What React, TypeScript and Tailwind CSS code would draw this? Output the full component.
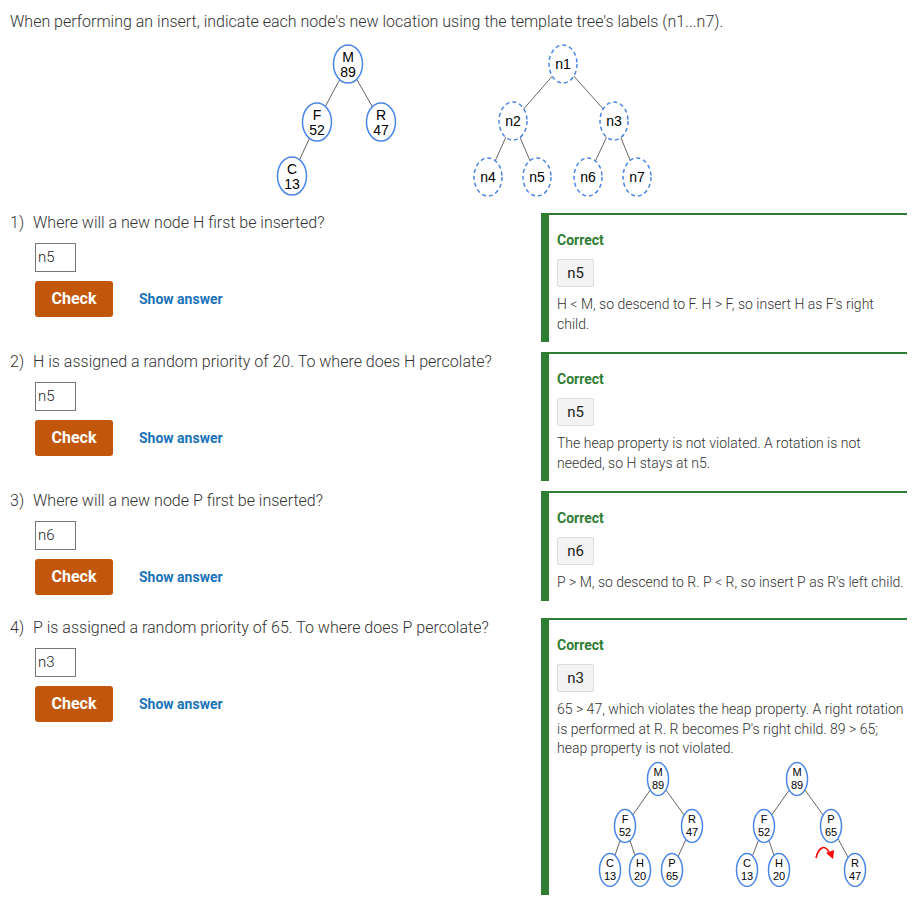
import React from "react";

const SVGF = '"Liberation Sans", Arial, sans-serif';
const BLUE = "#4a86e8";

type N = { x: number; y: number; a: string; b?: string };

function Tree({
  nodes,
  edges,
  rx,
  ry,
  fs,
  dy1,
  dy2,
  dashed,
}: {
  nodes: N[];
  edges: [number, number][];
  rx: number;
  ry: number;
  fs: number;
  dy1: number;
  dy2: number;
  dashed?: boolean;
}) {
  return (
    <g>
      {edges.map(([i, j], k) => (
        <line key={k} x1={nodes[i].x} y1={nodes[i].y} x2={nodes[j].x} y2={nodes[j].y} stroke="#666" strokeWidth={1} />
      ))}
      {nodes.map((n, k) => (
        <g key={k}>
          <ellipse
            cx={n.x}
            cy={n.y}
            rx={rx}
            ry={ry}
            fill="#fff"
            stroke={BLUE}
            strokeWidth={1.5}
            strokeDasharray={dashed ? "4 3" : undefined}
          />
          {n.b !== undefined ? (
            <>
              <text x={n.x} y={n.y + dy1} fontSize={fs} textAnchor="middle" fontFamily={SVGF} fill="#000">
                {n.a}
              </text>
              <text x={n.x} y={n.y + dy2} fontSize={fs} textAnchor="middle" fontFamily={SVGF} fill="#000">
                {n.b}
              </text>
            </>
          ) : (
            <text x={n.x} y={n.y + 5} fontSize={fs} textAnchor="middle" fontFamily={SVGF} fill="#000">
              {n.a}
            </text>
          )}
        </g>
      ))}
    </g>
  );
}

function TopTrees() {
  const left: N[] = [
    { x: 348, y: 64, a: "M", b: "89" },
    { x: 317, y: 122, a: "F", b: "52" },
    { x: 381, y: 122, a: "R", b: "47" },
    { x: 292, y: 176, a: "C", b: "13" },
  ];
  const tpl: N[] = [
    { x: 563, y: 64, a: "n1" },
    { x: 513, y: 121, a: "n2" },
    { x: 614, y: 121, a: "n3" },
    { x: 488, y: 177, a: "n4" },
    { x: 537, y: 177, a: "n5" },
    { x: 588, y: 177, a: "n6" },
    { x: 637, y: 177, a: "n7" },
  ];
  return (
    <svg width={400} height={160} viewBox="268 40 400 160" className="ml-[258px] mt-[8px] block">
      <Tree nodes={left} edges={[[0, 1], [0, 2], [1, 3]]} rx={14.5} ry={19} fs={14} dy1={-2} dy2={13} />
      <Tree
        nodes={tpl}
        edges={[[0, 1], [0, 2], [1, 3], [1, 4], [2, 5], [2, 6]]}
        rx={14}
        ry={19}
        fs={14}
        dy1={0}
        dy2={0}
        dashed
      />
    </svg>
  );
}

function BottomTrees() {
  const a: N[] = [
    { x: 658, y: 778, a: "M", b: "89" },
    { x: 625, y: 825, a: "F", b: "52" },
    { x: 692, y: 825, a: "R", b: "47" },
    { x: 610, y: 869, a: "C", b: "13" },
    { x: 640, y: 869, a: "H", b: "20" },
    { x: 672, y: 869, a: "P", b: "65" },
  ];
  const b: N[] = [
    { x: 797, y: 778, a: "M", b: "89" },
    { x: 764, y: 825, a: "F", b: "52" },
    { x: 831, y: 825, a: "P", b: "65" },
    { x: 747, y: 869, a: "C", b: "13" },
    { x: 779, y: 869, a: "H", b: "20" },
    { x: 855, y: 869, a: "R", b: "47" },
  ];
  return (
    <svg width={348} height={128} viewBox="557 758 348 128" className="block">
      <Tree nodes={a} edges={[[0, 1], [0, 2], [1, 3], [1, 4], [2, 5]]} rx={10.5} ry={16.5} fs={11} dy1={-3} dy2={10} />
      <Tree nodes={b} edges={[[0, 1], [0, 2], [1, 3], [1, 4], [2, 5]]} rx={10.5} ry={16.5} fs={11} dy1={-3} dy2={10} />
      <path d="M816 857 C 818 848, 824 842, 829 851" fill="none" stroke="#f00" strokeWidth={1.6} />
      <polygon points="826,852 834,849 833,858" fill="#f00" />
    </svg>
  );
}

type Q = { num: string; text: string; input: string; answer: string; expl: string; extra?: boolean };

const qs: Q[] = [
  {
    num: "1)",
    text: "Where will a new node H first be inserted?",
    input: "n5",
    answer: "n5",
    expl: "H < M, so descend to F. H > F, so insert H as F's right child.",
  },
  {
    num: "2)",
    text: "H is assigned a random priority of 20. To where does H percolate?",
    input: "n5",
    answer: "n5",
    expl: "The heap property is not violated. A rotation is not needed, so H stays at n5.",
  },
  {
    num: "3)",
    text: "Where will a new node P first be inserted?",
    input: "n6",
    answer: "n6",
    expl: "P > M, so descend to R. P < R, so insert P as R's left child.",
  },
  {
    num: "4)",
    text: "P is assigned a random priority of 65. To where does P percolate?",
    input: "n3",
    answer: "n3",
    expl: "65 > 47, which violates the heap property. A right rotation is performed at R. R becomes P's right child. 89 > 65; heap property is not violated.",
    extra: true,
  },
];

function Row({ q }: { q: Q }) {
  return (
    <div className="flex items-start mb-[10px]">
      <div className="w-[531px] pb-[13px]">
        <div className="flex text-[16px] leading-[20px] font-light text-[#333]">
          <span className="w-[23px] shrink-0">{q.num}</span>
          <span>{q.text}</span>
        </div>
        <div className="ml-[25px] mt-[10px] w-[41px] h-[29px] border border-[#767676] pl-[2px] text-[15px] leading-[27px] font-light text-[#222]">
          {q.input}
        </div>
        <div className="ml-[25px] mt-[9px] flex items-center">
          <div className="w-[78px] h-[36px] rounded-[3px] bg-[#c2570c] text-white font-bold text-[16px] flex items-center justify-center">
            Check
          </div>
          <div className="ml-[26px] text-[14px] font-bold text-[#1a72b8]">Show answer</div>
        </div>
      </div>
      <div className="w-[366px] border-t-2 border-l-8 border-[#2e7d32] pl-[8px] pr-[2px] pt-[15px] pb-[8px]">
        <div className="text-[14px] leading-[20px] font-bold text-[#2e7d32]">Correct</div>
        <div className="mt-[9px] w-[37px] h-[28px] border border-[#dcdcdc] bg-[#f3f3f3] rounded-[2px] flex items-center justify-center text-[15px] text-[#222]">
          {q.answer}
        </div>
        <div className="mt-[8px] text-[14px] leading-[19.5px] font-light text-[#333]">{q.expl}</div>
        {q.extra && <BottomTrees />}
      </div>
    </div>
  );
}

export default function App() {
  return (
    <div className="w-[917px] min-h-[904px] bg-white pl-[10px] pr-[10px]" style={{ fontFamily: "Roboto, sans-serif" }}>
      <div className="pt-[12px] text-[16px] leading-[20px] font-light text-[#333]">
        When performing an insert, indicate each node's new location using the template tree's labels (n1...n7).
      </div>
      <TopTrees />
      <div className="mt-[13px]">
        {qs.map((q) => (
          <Row key={q.num} q={q} />
        ))}
      </div>
    </div>
  );
}
